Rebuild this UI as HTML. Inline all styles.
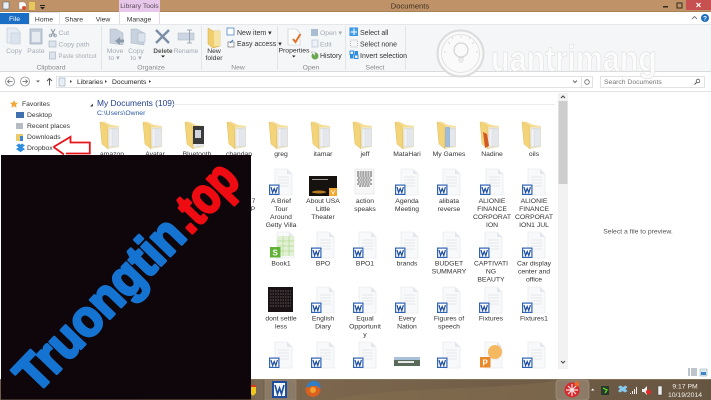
<!DOCTYPE html>
<html><head><meta charset="utf-8"><title>Documents</title>
<style>
html,body{margin:0;padding:0;background:#fff;width:711px;height:400px;overflow:hidden}
svg{display:block;position:absolute;left:0;top:0;filter:blur(.3px)}
text{font-family:"Liberation Sans",sans-serif;font-size:6.8px;fill:#333}
.g{fill:#8a8a8a}
.d{fill:#a4abb4}
.n{font-size:7px;fill:#333}
</style></head><body>
<svg width="711" height="400" viewBox="0 0 711 400" xmlns="http://www.w3.org/2000/svg">
<defs>
<linearGradient id="tb" x1="0" x2="1" y1="0" y2="0"><stop offset="0" stop-color="#6f5d4a"/><stop offset=".45" stop-color="#7c664d"/><stop offset=".7" stop-color="#725e48"/><stop offset="1" stop-color="#665541"/></linearGradient>
<g id="folder">
<path d="M-12 0 L-8 -0.5 L-1 3 L7 4 L7 24 L-4 27 Z" fill="#f5dc90"/>
<path d="M-4 5 L7 4.500 L7 25 L-4 27 Z" fill="#f1e6c0"/>
<path d="M-3 7 L5 6 L5 24 L-3 25 Z" fill="#f0f2f5" stroke="#cfd4da" stroke-width=".5"/>
<path d="M0 7 L6.500 7 L6.500 24 L0 24.500 Z" fill="#e4e7eb" stroke="#cfd4da" stroke-width=".4"/>
<path d="M-12 0 L-5 4 L-4 27 L-10 22 Z" fill="#f4d478" stroke="#dfbb60" stroke-width=".5"/>
</g>
<g id="page">
<path d="M-6 0 H6 L11 5 V26 H-6 Z" fill="#f8f9fa" stroke="#e2e5e9" stroke-width=".6"/>
<path d="M6 0 V5 H11 Z" fill="#e4e7eb"/>
<path d="M-3 8H8M-3 11H8M-3 14H8M-3 17H8" stroke="#e4e6e9" stroke-width="1"/>
</g>
<g id="word">
<rect x="0" y="0" width="10.500" height="10.500" fill="#2f63b5"/>
<rect x="1.200" y="1.200" width="8.100" height="8.100" fill="#fff"/>
<path d="M2 2.600 L3.600 8 L5.200 4 L6.800 8 L8.400 2.600" fill="none" stroke="#1d4d9e" stroke-width="1.200"/>
</g>
<g id="doc"><use href="#page"/><use href="#word" x="-12" y="15.500"/></g>
</defs>

<rect width="711" height="400" fill="#fff"/>
<!-- title bar -->
<rect width="711" height="12" fill="#bf9268"/>
<rect y="11" width="711" height="1" fill="#a98259"/>
<rect x="3" y="2" width="6" height="7" fill="#e8eef4" stroke="#5a6a80" stroke-width=".6"/>
<path d="M19 2h5l2 2v5h-7z" fill="#fff" stroke="#888" stroke-width=".4"/><circle cx="24" cy="8" r="2" fill="#d9502e"/>
<rect x="29" y="2" width="6" height="8" fill="#e8c75a"/>
<rect x="40" y="5" width="5" height="1" fill="#222"/><path d="M40 7h5l-2.500 2.500z" fill="#222"/>
<rect x="119" y="0" width="41" height="12" fill="#e8c8ea"/>
<text x="139.500" y="8" text-anchor="middle" style="fill:#5a4a5a">Library Tools</text>
<text x="410" y="8.500" text-anchor="middle" style="font-size:7.600px;fill:#3c3022">Documents</text>
<rect x="686" y="0" width="25" height="10" fill="#c75050"/>
<path d="M696.500 3l4 4m0-4l-4 4" stroke="#fff" stroke-width="1.200"/>
<rect x="663" y="6" width="5" height="1.500" fill="#332b20"/>
<rect x="677" y="3" width="5" height="5" fill="none" stroke="#332b20" stroke-width="1"/>

<!-- tabs -->
<rect y="12" width="711" height="12" fill="#fff"/>
<rect x="0" y="13" width="29" height="11" fill="#1a6fc4"/>
<text x="14.500" y="21" text-anchor="middle" style="fill:#fff">File</text>
<path d="M29.500 24V12.500H59.500V24" fill="#fff" stroke="#d8dade" stroke-width=".7"/>
<text x="44" y="21.500" text-anchor="middle">Home</text>
<text x="74" y="21.500" text-anchor="middle">Share</text>
<text x="103" y="21.500" text-anchor="middle">View</text>
<path d="M119.500 12V24M159.500 12V24" stroke="#dcc8dc" stroke-width=".7"/>
<text x="139" y="21.500" text-anchor="middle">Manage</text>
<path d="M692 19l2.500-2.500 2.500 2.500" fill="none" stroke="#777" stroke-width=".9"/>
<circle cx="705" cy="18" r="4" fill="#1d6fbe"/><text x="705" y="20.500" text-anchor="middle" style="font-size:6.500px;font-weight:bold;fill:#fff">?</text>

<!-- ribbon -->
<rect y="24" width="711" height="48" fill="#f5f6f7"/>
<rect y="24" width="711" height=".7" fill="#dfe1e4"/>
<rect y="71" width="711" height="1" fill="#dadbdc"/>
<path d="M101.500 26V70M201.500 26V70M277.500 26V70M345.500 26V70M405.500 26V70" stroke="#dfe1e3" stroke-width=".8"/>
<!-- clipboard -->
<path d="M7 28h9l4 4v11H7z" fill="#e6ecf3" stroke="#bcc6d2" stroke-width=".6"/><rect x="11" y="33" width="9" height="11" fill="#dbe4ee" stroke="#bcc6d2" stroke-width=".5"/>
<text x="14" y="53" text-anchor="middle" class="d">Copy</text>
<rect x="30" y="29" width="12" height="15" fill="#c5cfdc" stroke="#9aa8b8" stroke-width=".7"/><rect x="32" y="32" width="8" height="10" fill="#e6ebf1"/>
<text x="36" y="53" text-anchor="middle" class="d">Paste</text>
<path d="M51 29l4 7m0-7l-4 7" stroke="#8d99a6" stroke-width="1"/><circle cx="50.500" cy="35.500" r="1.400" fill="none" stroke="#8d99a6" stroke-width=".7"/><circle cx="55" cy="35.500" r="1.400" fill="none" stroke="#8d99a6" stroke-width=".7"/>
<text x="58.500" y="35" class="d">Cut</text>
<rect x="49" y="41" width="7" height="6" fill="#dbe4ee" stroke="#a4b0bd" stroke-width=".6"/>
<text x="58.500" y="46.500" class="d">Copy path</text>
<rect x="49.500" y="52" width="6" height="7" fill="#dbe4ee" stroke="#a4b0bd" stroke-width=".6"/>
<text x="58.500" y="58" class="d" textLength="38" lengthAdjust="spacingAndGlyphs">Paste shortcut</text>
<text x="51" y="69.500" text-anchor="middle" class="g">Clipboard</text>
<!-- organize -->
<path d="M110 29h6l7 4v12l-13-2z" fill="#c8d2de" stroke="#a7b3c1" stroke-width=".5"/><path d="M115 41l5-4v2.500h4v3h-4v2.500z" fill="#8c9bac"/>
<text x="115" y="53" text-anchor="middle" class="d">Move</text><text x="114" y="60" text-anchor="middle" class="d">to ▾</text>
<path d="M131 29h6l7 4v12l-13-2z" fill="#c8d2de" stroke="#a7b3c1" stroke-width=".5"/><rect x="138" y="33" width="7" height="9" fill="#dbe4ee" stroke="#a7b3c1" stroke-width=".5"/>
<text x="136" y="53" text-anchor="middle" class="d">Copy</text><text x="136" y="60" text-anchor="middle" class="d">to ▾</text>
<path d="M156 30l13 13m0-13l-13 13" stroke="#7b8ea6" stroke-width="2.400"/>
<text x="163" y="53" text-anchor="middle" style="font-weight:bold;fill:#555;font-size:6.400px">Delete</text>
<path d="M161 55.500h4l-2 2z" fill="#222"/>
<rect x="178" y="33" width="16" height="7" fill="#ccd6e2" stroke="#a7b3c1" stroke-width=".5"/><path d="M189.500 30v13M187 30h5M187 43h5" stroke="#8a97a6" stroke-width=".8"/>
<text x="186" y="53" text-anchor="middle" class="d" style="font-size:6.500px">Rename</text>
<text x="151" y="69.500" text-anchor="middle" class="g">Organize</text>
<!-- new -->
<path d="M208 28l5 3h7v15l-7 2-5-4z" fill="#f0ce6c" stroke="#d3a93f" stroke-width=".5"/><path d="M214 31h6v15h-6z" fill="#f6e2a2"/>
<text x="214" y="53" text-anchor="middle">New</text><text x="214" y="60" text-anchor="middle">folder</text>
<rect x="227" y="28" width="7" height="7" fill="#fff" stroke="#4f86c5" stroke-width=".8"/>
<text x="237" y="35" class="n">New item ▾</text>
<path d="M228 42h6v5h-6z" fill="#fff" stroke="#777" stroke-width=".7"/><path d="M230 43l3-3" stroke="#3a78c2"/>
<text x="237" y="46" class="n">Easy access ▾</text>
<text x="238" y="69.500" text-anchor="middle" class="g">New</text>
<!-- open -->
<path d="M288 29h8l4 4v12h-12z" fill="#fbfbfb" stroke="#c6c6c6" stroke-width=".6"/><path d="M293 39l2.500 3 5-8" fill="none" stroke="#e0722a" stroke-width="2"/>
<text x="294" y="52.500" text-anchor="middle">Properties</text><path d="M292 55.500h3.500l-1.750 2z" fill="#222"/>
<rect x="311" y="29" width="7" height="7" fill="#a9bdd3"/><text x="320" y="35" class="d">Open ▾</text>
<rect x="312" y="40" width="6" height="7" fill="#eef2f6" stroke="#a9bdd3" stroke-width=".6"/><text x="320" y="46.500" class="d">Edit</text>
<circle cx="315" cy="56" r="3.500" fill="#6aa84f"/><path d="M311 52h4v4z" fill="#fff" stroke="#888" stroke-width=".4"/><text x="320" y="58" class="n">History</text>
<text x="311" y="69.500" text-anchor="middle" class="g">Open</text>
<!-- select -->
<g fill="#4aa3e8"><rect x="350" y="28" width="7.500" height="7.500" fill="#fff" stroke="#2f8de0"/><rect x="350.500" y="28.500" width="3" height="3"/><rect x="354.500" y="28.500" width="3" height="3"/><rect x="350.500" y="32.500" width="3" height="3"/><rect x="354.500" y="32.500" width="3" height="3"/></g>
<text x="360" y="35" class="n">Select all</text>
<rect x="350.500" y="40" width="7" height="7" fill="none" stroke="#aaa" stroke-width=".8" stroke-dasharray="1 1"/>
<text x="360" y="46.500" class="n">Select none</text>
<rect x="350" y="51" width="3.500" height="3.500" fill="none" stroke="#2f8de0"/><rect x="354.500" y="51" width="3.500" height="3.500" fill="#2f8de0"/><rect x="350" y="55" width="3.500" height="3.500" fill="#2f8de0"/><rect x="354.500" y="55" width="3.500" height="3.500" fill="none" stroke="#2f8de0"/>
<text x="360" y="58" class="n">Invert selection</text>
<text x="375" y="69.500" text-anchor="middle" class="g">Select</text>

<!-- address bar row -->
<rect y="72" width="711" height="20" fill="#fff"/>
<rect y="91" width="711" height="1" fill="#e2e3e5"/>
<circle cx="10" cy="81.500" r="4.500" fill="#fff" stroke="#8a8f96" stroke-width=".8"/><path d="M12.500 81.500H7.500M9.500 79.500l-2 2 2 2" fill="none" stroke="#666" stroke-width=".8"/>
<circle cx="25" cy="81.500" r="4.500" fill="#fff" stroke="#8a8f96" stroke-width=".8"/><path d="M22.500 81.500h5M25.500 79.500l2 2-2 2" fill="none" stroke="#666" stroke-width=".8"/>
<path d="M36 80.500h4l-2 2z" fill="#666"/>
<path d="M49.500 85.500v-7M47 81l2.500-2.500L52 81" fill="none" stroke="#555" stroke-width="1"/>
<rect x="56.500" y="76.500" width="536" height="11" fill="#fff" stroke="#dadbdc" stroke-width=".8"/>
<rect x="59" y="78" width="6" height="8" fill="#e8eef5" stroke="#7f93aa" stroke-width=".5"/>
<path d="M70 80l2 1.500-2 1.500z" fill="#444"/><text x="77" y="84" style="fill:#222">Libraries</text>
<path d="M105 80l2 1.500-2 1.500z" fill="#444"/><text x="112" y="84" style="fill:#222">Documents</text>
<path d="M149 80l2 1.500-2 1.500z" fill="#444"/>
<path d="M573 80.500l2 2 2-2" fill="none" stroke="#444" stroke-width=".8"/>
<path d="M581.500 76.500v11" stroke="#dadbdc" stroke-width=".7"/>
<circle cx="587" cy="82" r="2.300" fill="none" stroke="#666" stroke-width=".8"/>
<rect x="600.500" y="76.500" width="104" height="11" fill="#fff" stroke="#dadbdc" stroke-width=".8"/>
<text x="604" y="84" style="fill:#777">Search Documents</text>
<circle cx="698" cy="81" r="1.800" fill="none" stroke="#555" stroke-width=".8"/><path d="M696.500 82.500l-2 2" stroke="#555" stroke-width="1"/>

<!-- nav pane -->
<path d="M14 100l1.200 2.600 2.800.3-2 2 .5 2.800-2.500-1.400-2.500 1.400.5-2.800-2-2 2.800-.3z" fill="#f2a93b"/>
<text x="22" y="106">Favorites</text>
<rect x="16" y="112" width="8" height="6" fill="#3f70b0"/><text x="27" y="117">Desktop</text>
<rect x="16" y="123" width="7" height="6" fill="#b5bcc4"/><text x="27" y="128">Recent places</text>
<rect x="16" y="134" width="7" height="7" fill="#eccc6a"/><rect x="20" y="136" width="3" height="5" fill="#3f86d0"/><text x="27" y="139">Downloads</text>
<path d="M16 145.500l3-2 1.500 1.300 1.500-1.300 3 2-2.500 1.800 2.500 1.800-4.500 3-4.500-3 2.500-1.800z" fill="#2f8de0"/>
<text x="27" y="150">Dropbox</text>
<path d="M53.500 147L70.500 136.800V142.500H89.800V153.500H70.500L66 153.500 M53.500 147L64 154.500" fill="none" stroke="#e8141c" stroke-width="1.800"/>

<!-- header -->
<path d="M90 106.500l3-3v3z" fill="#444"/>
<text x="97" y="106" style="font-size:8.400px;fill:#23408f">My Documents (109)</text>
<rect x="171" y="104" width="384" height=".8" fill="#e4e7eb"/>
<text x="97" y="115" style="fill:#2a58a8">C:\Users\Owner</text>

<!-- row 1 folders -->
<use href="#folder" x="112" y="122"/><use href="#folder" x="155" y="122"/><use href="#folder" x="197" y="122"/><use href="#folder" x="239" y="122"/>
<use href="#folder" x="281" y="122"/><use href="#folder" x="323" y="122"/><use href="#folder" x="365" y="122"/><use href="#folder" x="407" y="122"/><use href="#folder" x="449" y="122"/><use href="#folder" x="492" y="122"/><use href="#folder" x="534" y="122"/>
<path d="M193 126h11v18h-11z" fill="#3a3a3a"/><path d="M195 130h6v8h-6z" fill="#cfd4da"/>
<path d="M483 132l2 16 4-2-2-12z" fill="#d35a25"/><path d="M445 127h5v20h-5z" fill="#7fa6cf" opacity=".7"/>
<g text-anchor="middle">
<text x="112" y="156">amazon</text><text x="155" y="156">Avatar</text><text x="197" y="156">Bluetooth</text><text x="239" y="156">chandan</text>
<text x="281" y="156">greg</text><text x="323" y="156">itamar</text><text x="365" y="156">jeff</text><text x="407" y="156">MataHari</text><text x="449" y="156">My Games</text><text x="492" y="156">Nadine</text><text x="534" y="156">oils</text>

<!-- row 2 labels -->
<text x="281" y="203">A Brief</text><text x="281" y="211">Tour</text><text x="281" y="219">Around</text><text x="281" y="227">Getty Villa</text>
<text x="323" y="203">About USA</text><text x="323" y="211">Little</text><text x="323" y="219">Theater</text>
<text x="365" y="203">action</text><text x="365" y="211">speaks</text>
<text x="407" y="203">Agenda</text><text x="407" y="211">Meeting</text>
<text x="449" y="203">alibata</text><text x="449" y="211">reverse</text>
<text x="492" y="203">ALIONIE</text><text x="492" y="211">FINANCE</text><text x="492" y="219">CORPORAT</text><text x="492" y="227">ION</text>
<text x="534" y="203">ALIONIE</text><text x="534" y="211">FINANCE</text><text x="534" y="219">CORPORAT</text><text x="534" y="227">ION1 JUL</text>
<text x="253.500" y="203">7</text><text x="253" y="211">P</text>

<!-- row 3 labels -->
<text x="281" y="265.500">Book1</text><text x="323" y="265.500">BPO</text><text x="365" y="265.500">BPO1</text><text x="407" y="265.500">brands</text>
<text x="449" y="265.500">BUDGET</text><text x="449" y="273.500">SUMMARY</text>
<text x="491" y="265.500">CAPTIVATI</text><text x="491" y="273.500">NG</text><text x="491" y="281.500">BEAUTY</text>
<text x="534" y="265.500">Car display</text><text x="534" y="273.500">center and</text><text x="534" y="281.500">office</text>

<!-- row 4 labels -->
<text x="281" y="320.500">dont settle</text><text x="281" y="328.500">less</text>
<text x="323" y="320.500">English</text><text x="323" y="328.500">Diary</text>
<text x="365" y="320.500">Equal</text><text x="365" y="328.500">Opportunit</text><text x="365" y="336.500">y</text>
<text x="407" y="320.500">Every</text><text x="407" y="328.500">Nation</text>
<text x="449" y="320.500">Figures of</text><text x="449" y="328.500">speech</text>
<text x="491" y="320.500">Fixtures</text><text x="534" y="320.500">Fixtures1</text>
</g>

<!-- row 2 icons -->
<use href="#doc" x="281" y="169"/>
<rect x="309" y="176" width="28" height="20" fill="#161210"/><rect x="312" y="179" width="16" height="1" fill="#999"/><ellipse cx="319" cy="192" rx="7" ry="1.500" fill="#b87a20"/><rect x="329" y="188" width="8" height="8" fill="#f4a62a"/><path d="M331 190l2 4 2-4" stroke="#fff" fill="none" stroke-width=".8"/>
<rect x="355" y="169" width="19" height="25" fill="#f7f7f7" stroke="#ddd" stroke-width=".5"/>
<path d="M357 172h15M357 174h15M357 176h15M358 178h13M357 180h15M358 182h13M357 184h15M359 186h11" stroke="#555" stroke-width=".9" stroke-dasharray="2 .6"/>
<use href="#doc" x="407" y="169"/><use href="#doc" x="449" y="169"/><use href="#doc" x="492" y="169"/><use href="#doc" x="534" y="169"/>

<!-- row 3 icons -->
<use href="#page" x="283" y="232"/>
<path d="M277 236h17v20h-17z" fill="#dff0cf" opacity=".9"/><path d="M277 241h17M277 246h17M277 251h17M283 236v20M289 236v20" stroke="#9fd07a" stroke-width=".5"/>
<rect x="270" y="247" width="10.500" height="10.500" fill="#5fb236"/><text x="275.200" y="255.700" text-anchor="middle" style="font-size:8px;font-weight:bold;fill:#fff">S</text>
<use href="#doc" x="323" y="232"/><use href="#doc" x="365" y="232"/><use href="#doc" x="407" y="232"/><use href="#doc" x="449" y="232"/><use href="#doc" x="491" y="232"/><use href="#doc" x="534" y="232"/>

<!-- row 4 icons -->
<rect x="268" y="287" width="25" height="25" fill="#1a1214"/>
<path d="M270 291h21M270 294h21M270 297h21M270 300h21M270 303h21M270 306h21" stroke="#7b6f70" stroke-width=".7" stroke-dasharray="1.500 1"/>
<use href="#doc" x="323" y="287"/><use href="#doc" x="365" y="287"/><use href="#doc" x="407" y="287"/><use href="#doc" x="449" y="287"/><use href="#doc" x="491" y="287"/><use href="#doc" x="534" y="287"/>

<!-- row 5 icons -->
<use href="#doc" x="281" y="342"/><use href="#doc" x="323" y="342"/><use href="#doc" x="365" y="342"/>
<rect x="394" y="357" width="26" height="9" fill="#5a6a5a"/><rect x="394" y="357" width="26" height="3" fill="#a8c0d8"/><rect x="398" y="361" width="16" height="2" fill="#e8e8e8"/>
<use href="#doc" x="449" y="342"/>
<use href="#page" x="491" y="342"/><circle cx="495" cy="352" r="7" fill="#f4b860"/><rect x="480" y="357" width="10.500" height="10.500" fill="#e88a2a"/><text x="485.200" y="365.500" text-anchor="middle" style="font-size:8px;font-weight:bold;fill:#fff">P</text>
<use href="#doc" x="534" y="342"/>

<!-- scrollbar -->
<rect x="558" y="93" width="10" height="276" fill="#f2f2f2"/>
<rect x="558.500" y="101" width="9" height="83" fill="#cdcdcd"/>
<path d="M561 98l2-2 2 2" fill="none" stroke="#444" stroke-width="1"/>
<path d="M561 361l2 2 2-2" fill="none" stroke="#444" stroke-width="1"/>

<!-- preview -->
<text x="638" y="233.500" text-anchor="middle" style="fill:#555">Select a file to preview.</text>
<!-- status -->
<path d="M688 369h2M688 371h2M688 373h2M688 375h2M691 369h6M691 371h6M691 373h6M691 375h6" stroke="#7d8a99" stroke-width="1"/>
<rect x="700" y="369" width="7" height="7" fill="#dfe9f3" stroke="#8aa" stroke-width=".5"/><rect x="701" y="372" width="5" height="3" fill="#3f86c8"/>

<!-- watermark -->
<circle cx="460.500" cy="53.500" r="23" fill="#fafafa" stroke="#dcdcdc" stroke-width="2"/>
<circle cx="460.500" cy="53.500" r="19" fill="none" stroke="#e2e2e2" stroke-width="1"/>
<circle cx="461" cy="50" r="7" fill="none" stroke="#d4d4d4" stroke-width="1.200"/>
<path d="M458 58h6M458 60h6M459 62h4M450 44l-2-2M472 44l2-2M446 52h-2M476 52h2M461 38v-2M453 39l-1-2M469 39l1-2" stroke="#dadada" stroke-width="1"/>
<text x="491" y="71" textLength="166" lengthAdjust="spacingAndGlyphs" style="font-size:36px;font-weight:bold;fill:#fcfcfc;stroke:#e2e2e2;stroke-width:.7px">uantrimang</text>

<!-- taskbar -->
<rect y="379" width="711" height="21" fill="url(#tb)"/>
<rect x="0" y="379" width="711" height=".8" fill="#8a7860"/>
<path d="M330 400C400 385 480 392 560 380V400Z" fill="#85704f" opacity=".5"/>
<rect x="255" y="380" width="8" height="20" fill="#7a6a58"/>
<path d="M250 385h6v8l-3 3-3-3z" fill="#f0c71c"/><path d="M250 385h6v2h-6z" fill="#d83a20"/>
<rect x="265" y="380" width="31" height="20" fill="#8a7a66" stroke="#9a8c78" stroke-width=".6"/>
<rect x="272" y="381" width="15" height="17" fill="#1d4d9e"/><rect x="274" y="383" width="11" height="13" fill="#f4f7fb"/>
<path d="M275 385l2.500 9 2-6 2 6 2.500-9" fill="none" stroke="#1d4d9e" stroke-width="1.600"/>
<circle cx="313" cy="389.500" r="7.500" fill="#d9611f"/><path d="M306 388c1-6 7-8 10-7 3 1 5 4 4.500 8-2-2-4-4-8-3-3 .5-5 1-6.500 2z" fill="#2e7fc6"/><circle cx="313" cy="390" r="3" fill="#f2a02f"/>
<rect x="556" y="380" width="33" height="20" rx="3" fill="#8d7b68" stroke="#a89a88" stroke-width=".6"/>
<circle cx="572" cy="390" r="7.500" fill="#d8292f"/><path d="M568 386l8 8m0-8l-8 8M572 384v12M566 390h12" stroke="#fbe3e3" stroke-width="1.200"/>
<circle cx="577" cy="384" r="2.500" fill="#e96a2a"/>
<path d="M591 390.500l1.700-2 1.700 2z" fill="#fff"/>
<rect x="601" y="386" width="8" height="9" fill="#2a3a2a"/><path d="M603 388l4 2-2 3" fill="none" stroke="#55d02a" stroke-width="1.400"/>
<path d="M618 387l2.500-1.500 2.500 1.500 2.500-1.500 2 1.500-2 2 2 2-2.500 1.500-2.500-1.500-2.500 1.500-2-1.500 2-2z" fill="#86c8ee"/>
<path d="M630 394h1v-1h-1zM632 394h1v-3h-1zM634 394h1v-5h-1zM636 394h1v-7h-1z" fill="#eee"/>
<path d="M642 389h2l3-3v9l-3-3h-2z" fill="#eee"/><circle cx="648.500" cy="392" r="2.500" fill="#e02a2a"/>
<rect x="658" y="386" width="4" height="9" fill="#eee" stroke="#444" stroke-width=".5"/>
<text x="685" y="388.500" text-anchor="middle" style="fill:#f4f0ea">9:17 PM</text>
<text x="685" y="397" text-anchor="middle" style="fill:#f4f0ea">10/19/2014</text>

<!-- black overlay -->
<rect x="1" y="155" width="250" height="244.500" fill="#0e060a"/>
<g transform="translate(36,395) rotate(-46)">
<text x="0" y="0" textLength="219" lengthAdjust="spacingAndGlyphs" style="font-size:51px;font-weight:bold;fill:#1573d1;stroke:#1573d1;stroke-width:3px;stroke-linejoin:round">Truongtin</text>
<text x="222" y="0" textLength="74" lengthAdjust="spacingAndGlyphs" style="font-size:51px;font-weight:bold;fill:#ee0b12;stroke:#ee0b12;stroke-width:3px;stroke-linejoin:round">.top</text>
</g>
</svg>
</body></html>
